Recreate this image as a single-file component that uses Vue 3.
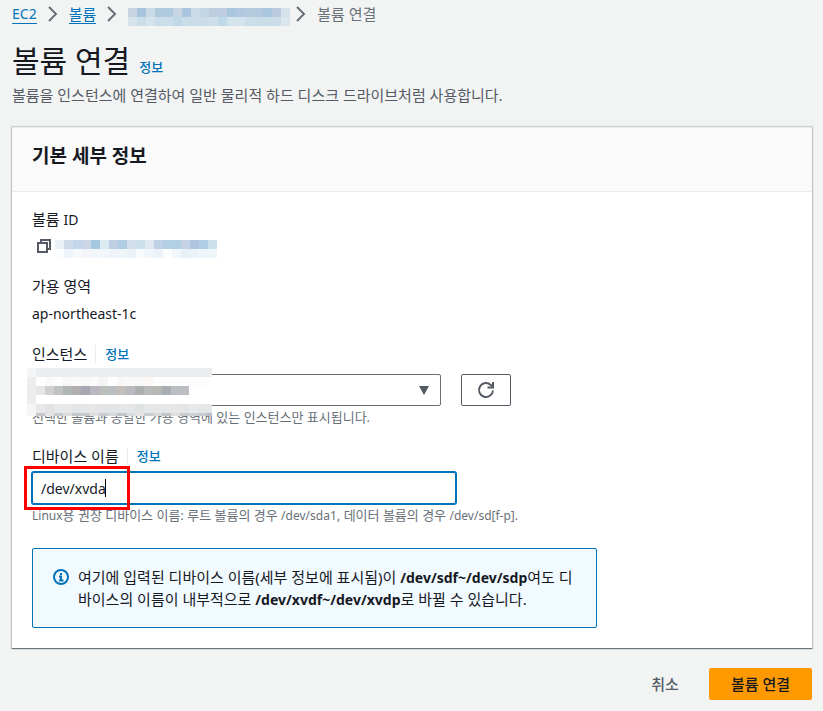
<script setup>
import { ref } from 'vue'

const device = ref('/dev/xvda')
const instance = ref('masked')

const row = (y, x, h, colors) =>
  colors.split(' ').map((c, i) => ({ x: x + i * 9, y, h, fill: '#' + c }))

const crumbMask = [
  ...row(0, 0, 9, 'c8d3e3 a8c5de cadbe7 b0cade b0cadf c8d5e4 abc4df cadae7 c2d6e6 bfcde0 bfcee2 a9c6df b1c9df b4cadf b3c9de a8c6de bacbdf d5e2ec'),
  ...row(9, 0, 9, 'd5e3eb cadde9 d5e3ec cadde9 cadde9 c0d9e8 cadde9 cadde9 cadde9 d0e0ea c0d9e8 d5e3ec d5e3ec cadde9 cadde9 cadde9 cadde9 dbe6ec')
]
const volumeMask = [
  ...row(0, 0, 9, 'ebf0f7 cddbea c3d7eb cbd6e6 a5c8e1 dceaf1 bfcfe4 b0cde3 d3dfec cbdfed dfe8f0 bfcfe4 b2cfe4 b2cfe4 c5d3e5 b1c5df b0cfe7 cbe0ed'),
  ...row(9, 0, 9, 'fcfdfe eff5fa f7fafd f2f6fb f2f7fb f2f7fb eef4fa eff6fa eaf2f8 f8fbfe f0f6fa ebf3f8 fcfdfe f2f7fb e9f1f8 ebf3f9 eff6fa eff6fa')
]
const instanceMask = [
  ...row(0, 0, 9, 'f4f5f6' + ' ecedef'.repeat(20)),
  ...row(9, 0, 9, 'ecedef fefefe fafafa fcfcfc f8f8f8 fbfafa f7f8f8 fafafa f5f5f5 fefefe f7f7f7 f9f9f9 f8f8f8 fbf7f5' + ' fdfdfd'.repeat(7)),
  ...row(18, 0, 9, 'ecedef e6e7e6 d0d0d2 c0c1c1 b0b6b3 b2adae a8a6b4 b9b6c2 bbbfbb b8bec2 c3beba b9b9c2 acb0af b7bab8 b6b9b3 a8aeb4 bbbec2 bbbdc0 ffffff ffffff ffffff'),
  ...row(27, 0, 9, 'ecedef' + ' ffffff'.repeat(20)),
  ...row(36, 0, 9, 'f5f5f6 e6e8ea e2e4e4 e8e9eb e8e9eb e3e5e6 e5e6e8 e5e6e8 e2e4e6 e2e4e6 e5e6e8 e5e6e8 dfe3e4 e5e6e8 e5e6e8 e5e6e8 e5e6e8 e3e5e6 e8e9eb e5e6e8 e5e6e8'),
  ...row(45, 0, 3, 'f7f7f7 c5c8cc e6e3e2 c8ccd1 dddcdc c3c7cc c5c8cc e1dedc c8ccd1 dad9da bfc4c8 d8dadd e6e3e2 c8ccd1 d9d9da c1c5c9 e1dedc c8ccd1 ced1d5 c8ccd1 b9bec8')
]
</script>

<template>
  <main class="page">
    <nav class="crumbs" aria-label="breadcrumb">
      <a href="#" class="latin">EC2</a>
      <svg class="chevron" viewBox="0 0 10 16"><path d="M1 1l7 7-7 7" /></svg>
      <a href="#">볼륨</a>
      <svg class="chevron" viewBox="0 0 10 16"><path d="M1 1l7 7-7 7" /></svg>
      <svg class="mask crumb-mask" width="162" height="18" shape-rendering="crispEdges">
        <rect v-for="(c, i) in crumbMask" :key="i" :x="c.x" :y="c.y" width="9" :height="c.h" :fill="c.fill" />
      </svg>
      <svg class="chevron" viewBox="0 0 10 16"><path d="M1 1l7 7-7 7" /></svg>
      <span class="current">볼륨 연결</span>
    </nav>

    <header class="title">
      <h1>볼륨 연결</h1>
      <a href="#" class="info">정보</a>
    </header>
    <p class="description">볼륨을 인스턴스에 연결하여 일반 물리적 하드 디스크 드라이브처럼 사용합니다.</p>

    <section class="card">
      <h2>기본 세부 정보</h2>
      <div class="body">
        <div class="pair">
          <div class="label">볼륨 <span class="latin">ID</span></div>
          <div class="value copy-row">
            <button type="button" class="copy" aria-label="복사">
              <svg width="16" height="16" viewBox="0 0 16 16"><path d="M2 5h9v9H2zM5 5V2h9v9h-3" /></svg>
            </button>
            <svg class="mask" width="162" height="18" shape-rendering="crispEdges">
              <rect v-for="(c, i) in volumeMask" :key="i" :x="c.x" :y="c.y" width="9" :height="c.h" :fill="c.fill" />
            </svg>
          </div>
        </div>

        <div class="pair zone">
          <div class="label">가용 영역</div>
          <div class="value"><span class="latin">ap-northeast-1c</span></div>
        </div>

        <div class="field">
          <div class="label-row">
            <label for="instance">인스턴스</label>
            <a href="#" class="info">정보</a>
          </div>
          <div class="select-row">
            <div class="select-wrap">
              <select id="instance" v-model="instance"><option value="masked"></option></select>
              <svg class="arrow" width="10" height="9" viewBox="0 0 10 9"><path d="M0 0h10L5 9z" /></svg>
              <svg class="mask instance-mask" width="185" height="48" shape-rendering="crispEdges">
                <rect v-for="(c, i) in instanceMask" :key="i" :x="c.x" :y="c.y" width="9" :height="c.h" :fill="c.fill" />
              </svg>
            </div>
            <button type="button" class="refresh" aria-label="새로 고침">
              <svg width="18" height="18" viewBox="0 0 18 18">
                <path d="M16 9.500a7 7 0 1 1-2.200-5.600l2 2" />
                <path d="M16 1v5.500h-5.500" />
              </svg>
            </button>
          </div>
          <p class="hint">선택한 볼륨과 동일한 가용 영역에 있는 인스턴스만 표시됩니다.</p>
        </div>

        <div class="field device">
          <div class="label-row">
            <label for="device">디바이스 이름</label>
            <a href="#" class="info">정보</a>
          </div>
          <div class="input-wrap">
            <input id="device" v-model="device" type="text" />
            <span class="caret"></span>
            <span class="highlight"></span>
          </div>
          <p class="hint"><span class="small-latin">Linux</span>용 권장 디바이스 이름: 루트 볼륨의 경우 <span class="small-latin">/dev/sda1</span>, 데이터 볼륨의 경우 <span class="small-latin">/dev/sd[f-p].</span></p>
        </div>

        <div class="alert" role="note">
          <svg width="16" height="16" viewBox="0 0 16 16">
            <circle cx="8" cy="8" r="7" />
            <path d="M8 4v2M6 7.500h2V11M6 11.500h4.500" />
          </svg>
          <p>여기에 입력된 디바이스 이름(세부 정보에 표시됨)이 <b>/dev/sdf~/dev/sdp</b>여도 디바이스의 이름이 내부적으로 <b>/dev/xvdf~/dev/xvdp</b>로 바뀔 수 있습니다.</p>
        </div>
      </div>
    </section>

    <footer class="actions">
      <button type="button" class="cancel">취소</button>
      <button type="button" class="primary">볼륨 연결</button>
    </footer>
  </main>
</template>

<style>
body {
  background: #f2f3f3;
}
</style>

<style scoped>
* {
  box-sizing: border-box;
}
.page {
  padding: 0 11px 11px 12px;
  color: #16191f;
  font: 400 15px/22px "Noto Sans", "Noto Sans CJK KR", sans-serif;
}
h1, h2, p {
  margin: 0;
  font-weight: 400;
}
button, input, select {
  font: inherit;
  color: inherit;
}
a {
  color: #0073bb;
  text-decoration: none;
}
svg {
  display: block;
  flex: none;
  fill: none;
}
.latin {
  font-size: 14px;
  line-height: 20px;
}
.crumbs {
  display: flex;
  align-items: center;
  height: 28px;
}
.crumbs a {
  height: 20px;
  line-height: 20px;
  border-bottom: 1px solid #0073bb;
}
.chevron {
  width: 10px;
  height: 16px;
  margin: 0 11px;
  stroke: #687078;
  stroke-width: 2;
}
.crumb-mask {
  margin: 6px -5px 0 0;
}
.current {
  color: #687078;
}
.title {
  display: flex;
  align-items: baseline;
  gap: 9px;
  margin-top: 13px;
}
h1 {
  font-size: 30px;
  line-height: 40px;
}
.info {
  font-size: 13px;
  font-weight: 500;
}
.description {
  margin-top: 3px;
  color: #545b64;
}
.card {
  margin-top: 21px;
  background: #fff;
  border-top: 1px solid #eaeded;
  box-shadow: 0 1px 1px rgba(0, 28, 36, 0.5), 0 0 1px 1px rgba(0, 28, 36, 0.15);
}
h2 {
  height: 64px;
  padding: 16px 20px;
  background: #fafafa;
  border-bottom: 1px solid #eaeded;
  font-size: 19px;
  line-height: 24px;
  font-weight: 700;
}
.body {
  padding: 16px 20px 20px;
}
.value {
  height: 22px;
  margin-top: 5px;
}
.copy-row {
  display: flex;
  align-items: center;
}
.copy {
  padding: 0 3px 0 4px;
  border: 0;
  background: none;
  stroke: #545b64;
  stroke-width: 2;
}
.copy-row .mask {
  margin-top: 6px;
}
.zone {
  margin-top: 18px;
}
.field {
  margin-top: 19px;
}
.label-row {
  display: flex;
  align-items: center;
  margin-bottom: 9px;
}
.label-row .info {
  margin-left: 8px;
  padding-left: 9px;
  border-left: 1px solid #eaeded;
  line-height: 18px;
}
.select-row {
  display: flex;
  gap: 20px;
}
.select-wrap {
  position: relative;
  flex: 0 1 409px;
}
select {
  display: block;
  width: 100%;
  height: 32px;
  appearance: none;
  background: #fff;
  border: 1px solid #687078;
  border-radius: 2px;
}
.arrow {
  position: absolute;
  right: 12px;
  top: 12px;
  fill: #545b64;
  pointer-events: none;
}
.instance-mask {
  position: absolute;
  left: -5px;
  top: -6px;
  z-index: 1;
  pointer-events: none;
}
.refresh {
  display: flex;
  align-items: center;
  justify-content: center;
  width: 50px;
  height: 32px;
  padding: 0;
  background: #fff;
  border: 1px solid #545b64;
  border-radius: 2px;
  stroke: #545b64;
  stroke-width: 2;
}
.hint {
  margin-top: 2px;
  color: #687078;
  font-size: 13px;
  line-height: 18px;
}
.small-latin {
  font-size: 12px;
  line-height: 16px;
}
.device .label-row {
  margin-bottom: 5px;
}
.input-wrap {
  position: relative;
  max-width: 424px;
}
input {
  display: block;
  width: 100%;
  height: 32px;
  padding: 0 8px;
  background: #fff;
  border: 1px solid #0073bb;
  border-radius: 2px;
  box-shadow: 0 0 0 1px #0073bb;
  outline: 0;
  font-size: 14px;
}
.caret {
  position: absolute;
  left: 73px;
  top: 7px;
  width: 1px;
  height: 18px;
  background: #000;
}
.highlight {
  position: absolute;
  left: -8px;
  top: -6px;
  width: 106px;
  height: 44px;
  border: 3px solid #f00;
  pointer-events: none;
}
.alert {
  display: flex;
  gap: 9px;
  max-width: 565px;
  margin-top: 24px;
  padding: 17px 20px;
  background: #f1faff;
  border: 1px solid #0073bb;
  border-radius: 2px;
}
.alert svg {
  margin-top: 3px;
  stroke: #0073bb;
  stroke-width: 2;
}
.alert b {
  font-size: 14px;
  line-height: 20px;
}
.actions {
  display: flex;
  justify-content: flex-end;
  gap: 8px;
  margin-top: 20px;
}
.actions button {
  height: 32px;
  padding: 0 22px;
  border: 0;
  border-radius: 2px;
  background: none;
  font-weight: 500;
}
.actions .cancel {
  color: #545b64;
}
.actions .primary {
  background: #ff9900;
}
</style>
